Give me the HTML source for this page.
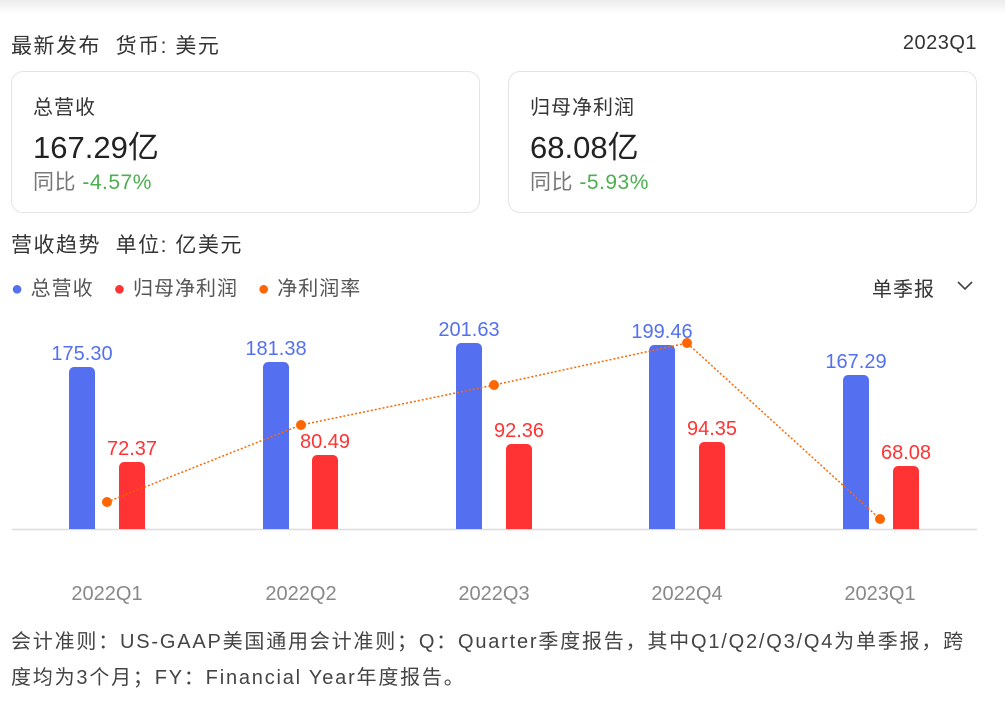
<!DOCTYPE html>
<html><head><meta charset="utf-8"><style>
*{margin:0;padding:0;box-sizing:border-box}
body{width:1005px;height:720px;background:#fff;position:relative;overflow:hidden;font-family:"Liberation Sans","Noto Sans CJK SC",sans-serif;color:#222}
.a{position:absolute;white-space:nowrap}
.card{position:absolute;top:71px;height:142px;border:1px solid #e4e4e4;border-radius:12px}
</style></head><body>
<div class="a" style="left:0;top:0;width:1005px;height:14px;background:linear-gradient(#ececec,#fff)"></div>
<div class="a" style="left:11px;top:30px;font-size:21px;letter-spacing:1.5px;color:#333">最新发布&nbsp;&nbsp;货币: 美元</div>
<div class="a" style="right:28px;top:32px;font-size:20px;letter-spacing:0.5px;color:#333">2023Q1</div>
<div class="card" style="left:11px;width:469px"></div>
<div class="card" style="left:508px;width:469px"></div>
<div class="a" style="left:33px;top:91px;font-size:20px;letter-spacing:1px;color:#333">总营收</div>
<div class="a" style="left:33px;top:122px;font-size:31px;color:#222">167.29亿</div>
<div class="a" style="left:33px;top:166px;font-size:21px;letter-spacing:0.5px;color:#777">同比 <span style="color:#4caf50">-4.57%</span></div>
<div class="a" style="left:530px;top:91px;font-size:20px;letter-spacing:1px;color:#333">归母净利润</div>
<div class="a" style="left:530px;top:122px;font-size:31px;color:#222">68.08亿</div>
<div class="a" style="left:530px;top:166px;font-size:21px;letter-spacing:0.5px;color:#777">同比 <span style="color:#4caf50">-5.93%</span></div>
<div class="a" style="left:11px;top:229px;font-size:21px;letter-spacing:1.5px;color:#333">营收趋势&nbsp;&nbsp;单位: 亿美元</div>
<div class="a" style="left:11px;top:272px;font-size:20px;letter-spacing:1px;color:#555"><span style="color:#5470f0">●</span> 总营收&nbsp;&nbsp;&nbsp;<span style="color:#f33">●</span> 归母净利润&nbsp;&nbsp;&nbsp;<span style="color:#f60">●</span> 净利润率</div>
<div class="a" style="left:872px;top:273px;font-size:20px;letter-spacing:1px;color:#333">单季报</div>
<svg class="a" style="left:0;top:0" width="1005" height="720">
<path d="M958 282l7 7 7-7" fill="none" stroke="#444" stroke-width="1.6"/>
<line x1="12" y1="529.5" x2="977" y2="529.5" stroke="#ddd" stroke-width="1.5"/>
<g fill="#5470f0">
<path d="M69 529V372a5 5 0 0 1 5-5h16a5 5 0 0 1 5 5V529z"/>
<path d="M263 529V367a5 5 0 0 1 5-5h16a5 5 0 0 1 5 5V529z"/>
<path d="M456 529V348a5 5 0 0 1 5-5h16a5 5 0 0 1 5 5V529z"/>
<path d="M649 529V350a5 5 0 0 1 5-5h16a5 5 0 0 1 5 5V529z"/>
<path d="M843 529V380a5 5 0 0 1 5-5h16a5 5 0 0 1 5 5V529z"/>
</g>
<g fill="#f33">
<path d="M119 529V467a5 5 0 0 1 5-5h16a5 5 0 0 1 5 5V529z"/>
<path d="M312 529V460a5 5 0 0 1 5-5h16a5 5 0 0 1 5 5V529z"/>
<path d="M506 529V449a5 5 0 0 1 5-5h16a5 5 0 0 1 5 5V529z"/>
<path d="M699 529V447a5 5 0 0 1 5-5h16a5 5 0 0 1 5 5V529z"/>
<path d="M893 529V471a5 5 0 0 1 5-5h16a5 5 0 0 1 5 5V529z"/>
</g>
<polyline points="107,502 301,425 494,385 687,343 880,519" fill="none" stroke="#f60" stroke-width="1.5" stroke-dasharray="2,2"/>
<g fill="#f60"><circle cx="107" cy="502" r="5"/><circle cx="301" cy="425" r="5"/><circle cx="494" cy="385" r="5"/><circle cx="687" cy="343" r="5"/><circle cx="880" cy="519" r="5"/></g>
<g font-family="Liberation Sans" font-size="20" text-anchor="middle" fill="#5470f0">
<text x="82" y="360">175.30</text><text x="276" y="355">181.38</text><text x="469" y="336">201.63</text><text x="662" y="338">199.46</text><text x="856" y="368">167.29</text>
</g>
<g font-family="Liberation Sans" font-size="20" text-anchor="middle" fill="#f33">
<text x="132" y="455">72.37</text><text x="325" y="448">80.49</text><text x="519" y="437">92.36</text><text x="712" y="435">94.35</text><text x="906" y="459">68.08</text>
</g>
<g font-family="Liberation Sans" font-size="20" text-anchor="middle" fill="#888">
<text x="107" y="600">2022Q1</text><text x="301" y="600">2022Q2</text><text x="494" y="600">2022Q3</text><text x="687" y="600">2022Q4</text><text x="880" y="600">2023Q1</text>
</g>
</svg>
<div class="a" style="left:11px;top:624px;font-size:20px;line-height:36px;letter-spacing:1.8px;color:#444">会计准则：US-GAAP美国通用会计准则；Q：Quarter季度报告，其中Q1/Q2/Q3/Q4为单季报，跨<br>度均为3个月；FY：Financial Year年度报告。</div>
</body></html>
